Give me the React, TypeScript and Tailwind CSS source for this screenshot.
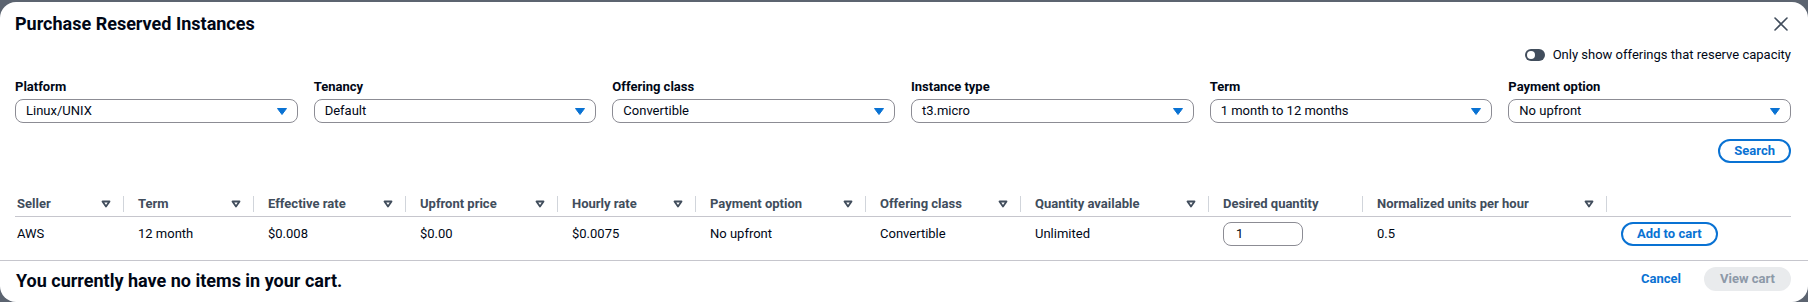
import React from 'react'

const FILTERS = [
  { label: 'Platform', value: 'Linux/UNIX' },
  { label: 'Tenancy', value: 'Default' },
  { label: 'Offering class', value: 'Convertible' },
  { label: 'Instance type', value: 't3.micro' },
  { label: 'Term', value: '1 month to 12 months' },
  { label: 'Payment option', value: 'No upfront' },
]

const COLUMNS = [
  { label: 'Seller', sortable: true },
  { label: 'Term', sortable: true },
  { label: 'Effective rate', sortable: true },
  { label: 'Upfront price', sortable: true },
  { label: 'Hourly rate', sortable: true },
  { label: 'Payment option', sortable: true },
  { label: 'Offering class', sortable: true },
  { label: 'Quantity available', sortable: true },
  { label: 'Desired quantity', sortable: false },
  { label: 'Normalized units per hour', sortable: true },
  { label: '', sortable: false },
]

const ROW = ['AWS', '12 month', '$0.008', '$0.00', '$0.0075', 'No upfront', 'Convertible', 'Unlimited']

function CaretDown() {
  return (
    <svg width="10" height="7" viewBox="0 0 10 7" className="shrink-0">
      <path d="M0.5 0.5h9L5 6.5z" fill="#0972d3" stroke="#0972d3" strokeLinejoin="round" />
    </svg>
  )
}

function SortIcon() {
  return (
    <svg width="10" height="8" viewBox="0 0 10 8" className="shrink-0">
      <path d="M1.5 1.5h7L5 6.5z" fill="none" stroke="#414d5c" strokeWidth="1.8" strokeLinejoin="round" />
    </svg>
  )
}

function CloseIcon() {
  return (
    <svg width="16" height="16" viewBox="0 0 16 16" className="mr-[2px]">
      <path d="M2 2l12 12M14 2L2 14" stroke="#414d5c" strokeWidth="1.6" strokeLinecap="round" />
    </svg>
  )
}

export default function App() {
  return (
    <div className="h-[302px] bg-[#5c6470] pt-[2px] [font-family:Roboto,sans-serif] text-[13px] text-[#000716]">
      <div className="flex h-[300px] flex-col overflow-hidden rounded-2xl bg-white">
        {/* Header */}
        <div className="flex h-[43px] items-center justify-between pl-[15px] pr-[17px]">
          <h2 className="text-[18px] font-bold leading-[22px]">Purchase Reserved Instances</h2>
          <CloseIcon />
        </div>

        <div className="flex h-[20px] items-center justify-end gap-2 pl-[15px] pr-[17px]">
          <span className="flex h-[12px] w-[20px] items-center rounded-full bg-[#414d5c]">
            <span className="ml-[2px] h-[8px] w-[8px] rounded-full bg-white" />
          </span>
          <span className="leading-[20px]">Only show offerings that reserve capacity</span>
        </div>

        {/* Filters */}
        <div className="mt-[12px] grid grid-cols-6 gap-4 pl-[15px] pr-[17px]">
          {FILTERS.map((f) => (
            <div key={f.label}>
              <div className="font-bold leading-[20px]">{f.label}</div>
              <div className="mt-[2px] flex h-[24px] items-center justify-between rounded-lg border border-[#8c8c94] px-[10px]">
                <span>{f.value}</span>
                <CaretDown />
              </div>
            </div>
          ))}
        </div>

        <div className="mt-[16px] flex justify-end pl-[15px] pr-[17px]">
          <button className="h-[24px] rounded-full border-2 border-[#0972d3] px-[14px] font-bold text-[#0972d3]">
            Search
          </button>
        </div>

        {/* Table */}
        <div className="mt-[29px] pl-[15px] pr-[17px]">
          <div className="grid grid-cols-[108px_130px_152px_152px_138px_170px_155px_188px_154px_244px_185px] border-b border-[#c6c6cd]">
            {COLUMNS.map((c, i) => (
              <div key={i} className="flex h-[24px] items-center">
                {i > 0 && <span className="h-[16px] w-px shrink-0 bg-[#d1d5db]" />}
                <div
                  className={`flex flex-1 items-center justify-between pr-[12px] font-bold text-[#414d5c] ${
                    i === 0 ? 'pl-[2px]' : 'pl-[14px]'
                  }`}
                >
                  <span className="whitespace-nowrap">{c.label}</span>
                  {c.sortable && <SortIcon />}
                </div>
              </div>
            ))}
          </div>
          <div className="grid h-[43px] grid-cols-[108px_130px_152px_152px_138px_170px_155px_188px_154px_244px_185px] items-start pt-[5px]">
            {ROW.map((v, i) => (
              <div key={i} className={`flex h-[24px] items-center ${i === 0 ? 'pl-[2px]' : 'pl-[15px]'}`}>
                {v}
              </div>
            ))}
            <div className="flex h-[24px] items-center pl-[15px]">
              <div className="flex h-[24px] w-[80px] items-center rounded-lg border border-[#8c8c94] px-[12px]">1</div>
            </div>
            <div className="flex h-[24px] items-center pl-[15px]">0.5</div>
            <div className="flex h-[24px] items-center pl-[15px]">
              <button className="h-[24px] rounded-full border-2 border-[#0972d3] px-[14px] font-bold text-[#0972d3]">
                Add to cart
              </button>
            </div>
          </div>
        </div>

        {/* Footer */}
        <div className="flex h-[41px] items-center justify-between border-t border-[#c6c6cd] pl-[16px] pr-[17px]">
          <span className="text-[18px] font-bold leading-[22px]">You currently have no items in your cart.</span>
          <div className="mb-[4px] flex items-center gap-[23px]">
            <span className="font-bold text-[#0972d3]">Cancel</span>
            <button className="h-[24px] rounded-full border-2 border-[#e9ebed] bg-[#e9ebed] px-[14px] font-bold text-[#8d99a8]">
              View cart
            </button>
          </div>
        </div>
      </div>
    </div>
  )
}
